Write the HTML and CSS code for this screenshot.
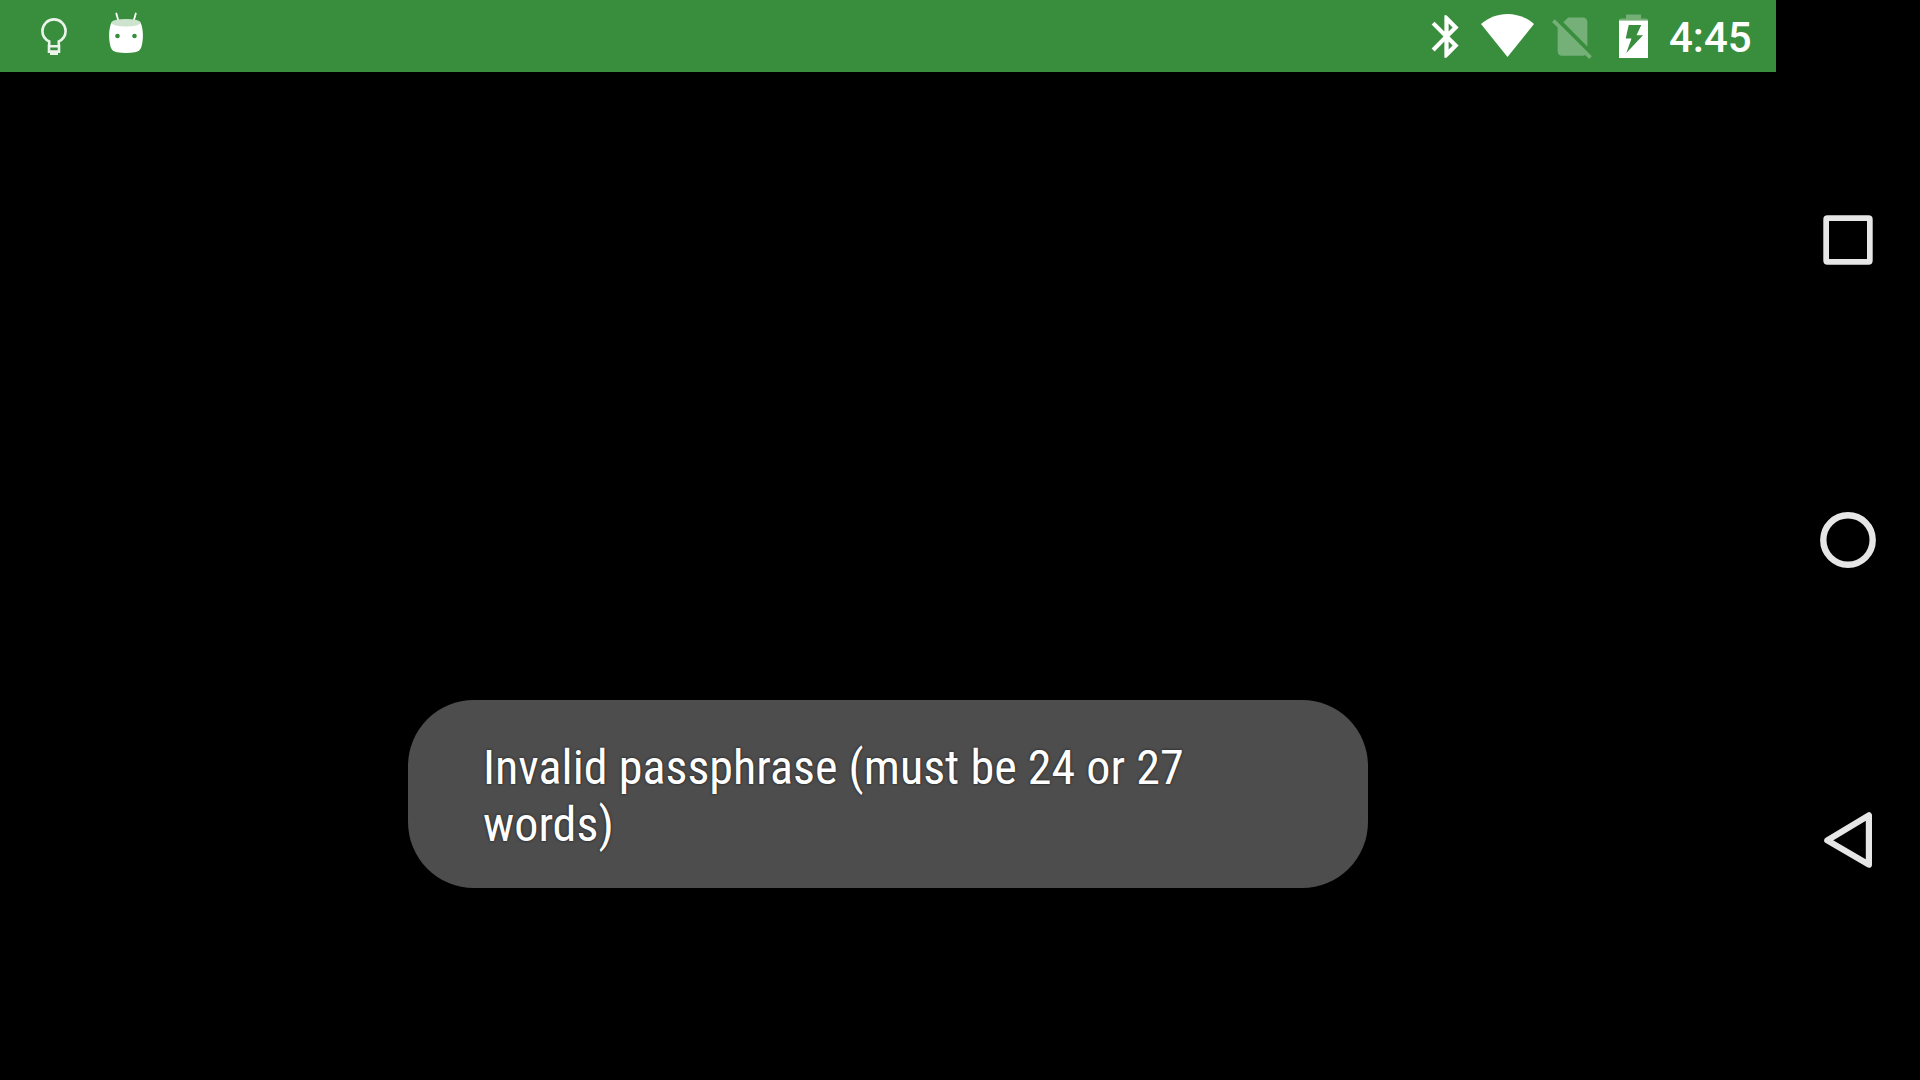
FILE: index.html
```html
<!DOCTYPE html>
<html lang="en">
<head>
<meta charset="utf-8">
<title>Passphrase</title>
<link rel="stylesheet" href="styles.css">
</head>
<body>
<div class="screen">
  <div class="app">
    <header class="status-bar">
      <div class="notifications">
        <svg class="icon" width="28" height="72" viewBox="40 0 28 72" fill="none" stroke="#ebf4eb" stroke-width="2.6">
          <path d="M49.2 46V41.4C45 39.4 42.4 35.7 42.4 31A11.6 11.6 0 0 1 65.600 31C65.600 35.700 63 39.400 58.800 41.400V46"/>
          <path d="M49 45V51.600H59V45M48 46.300H60"/>
          <path d="M50 53.500H58" stroke-width="3"/>
        </svg>
        <svg class="icon" width="36" height="72" viewBox="108 0 36 72">
          <path d="M116.300 13.500L118.600 21.500M135.800 13.500L133.500 21.500" stroke="#fff" stroke-width="1.800" stroke-linecap="round"/>
          <path d="M111.500 22.500C108.500 29 108.500 39 110.500 46.500C111.500 50 113.500 51.500 117 52.200C122.500 53.200 129.500 53.200 135 52.200C138.500 51.500 140.500 50 141.500 46.500C143.500 39 143.500 29 140.500 22.500Z" fill="#fff"/>
          <ellipse cx="126" cy="22.700" rx="14.600" ry="3.800" fill="#cde3ce"/>
          <circle cx="117.500" cy="36" r="2.300" fill="#388e3c"/>
          <circle cx="134.500" cy="36" r="2.300" fill="#388e3c"/>
        </svg>
      </div>
      <div class="system">
        <svg class="icon" width="51" height="51" viewBox="0 0 24 24" fill="#fff"><path d="M17.710 7.710L12 2h-1v7.590L6.410 5 5 6.410 10.590 12 5 17.590 6.410 19 11 14.410V22h1l5.710-5.710-4.300-4.290 4.300-4.290zM13 5.830l1.880 1.880L13 9.590V5.830zm1.880 10.460L13 18.170v-3.760l1.880 1.880z"/></svg>
        <svg class="icon wifi" width="54" height="72" viewBox="1481 0 54 72" fill="#fff"><path d="M1481 24C1488.500 17.500 1498 14 1507.500 14S1526.500 17.500 1534 24L1507.500 57Z"/></svg>
        <svg class="icon sim" width="51" height="51" viewBox="0 0 24 24" fill="#fff"><path d="M18.990 5c0-1.100-.890-2-1.990-2h-7L7.660 5.340 19 16.680 18.990 5zM3.650 3.880L2.380 5.150 5 7.770V19c0 1.100.900 2 2 2h10.010c.350 0 .670-.100.960-.260l1.880 1.880 1.270-1.270L3.650 3.880z"/></svg>
        <svg class="icon battery" width="29" height="72" viewBox="1619 0 29 72" fill="#fff">
          <path d="M1626 14.500H1641V18.500H1646Q1648 18.500 1648 20.500H1619Q1619 18.500 1621 18.500H1626Z" opacity=".3"/>
          <path fill-rule="evenodd" d="M1619 20.500H1648V58H1619ZM1628.700 25L1625.700 38.500H1631.500L1626.300 53L1643 35.200H1636.500L1641.300 25Z"/>
        </svg>
        <span class="clock">4:45</span>
      </div>
    </header>
    <main class="content">
      <div class="toast"><p class="message">Invalid passphrase (must be 24 or 27 words)</p></div>
    </main>
  </div>
  <nav class="nav-bar">
    <svg width="60" height="60" viewBox="-30 -30 60 60"><path fill="#e6e6e6" fill-rule="evenodd" d="M-20.500 -24.700H20.500Q24.700 -24.700 24.700 -20.500V20.500Q24.700 24.700 20.500 24.700H-20.500Q-24.700 24.700 -24.700 20.500V-20.500Q-24.700 -24.700 -20.500 -24.700ZM-19 -19V19H19V-19Z"/></svg>
    <svg width="60" height="60" viewBox="-30 -30 60 60"><circle r="24.700" fill="none" stroke="#e6e6e6" stroke-width="6.400"/></svg>
    <svg width="60" height="60" viewBox="-30 -30 60 60"><path d="M20.900 -24.700V24.700L-20.700 0.300Z" fill="none" stroke="#e6e6e6" stroke-width="6.200" stroke-linejoin="round"/></svg>
  </nav>
</div>
</body>
</html>
```
FILE: styles.css
```css
body {
  margin: 0;
  background: #000;
}

.screen {
  display: flex;
  width: 1920px;
  height: 1080px;
  overflow: hidden;
  font-family: Roboto, sans-serif;
  color: #fff;
}

.app {
  display: flex;
  flex-direction: column;
  width: 1776px;
}

.status-bar {
  display: flex;
  justify-content: space-between;
  height: 72px;
  background: #388e3c;
}

.notifications {
  display: flex;
  gap: 40px;
  padding-left: 40px;
}

.system {
  display: flex;
  align-items: center;
  width: 355px;
}

.icon {
  display: block;
  flex: none;
}

.wifi {
  margin-left: 9px;
}

.sim {
  margin-left: 12px;
  opacity: 0.3;
}

.battery {
  margin-left: 21px;
}

.clock {
  margin-left: 21px;
  font-size: 42px;
  font-weight: 500;
  line-height: 72px;
  padding-top: 4px;
}

.content {
  display: flex;
  flex: 1;
  align-items: flex-end;
  justify-content: center;
  padding-bottom: 192px;
}

.toast {
  box-sizing: border-box;
  width: 960px;
  height: 188px;
  padding: 39px 75px 0;
  border-radius: 66px;
  background: #4d4d4d;
}

.message {
  margin: 0;
  font-family: "Roboto Condensed", Roboto, sans-serif;
  font-stretch: 75%;
  font-size: 48px;
  line-height: 57px;
  letter-spacing: 0.05px;
  text-shadow: 0 0 3px rgba(0, 0, 0, 0.7);
}

.nav-bar {
  display: flex;
  flex-direction: column;
  align-items: center;
  gap: 240px;
  width: 144px;
  padding-top: 210px;
  box-sizing: border-box;
}
```
